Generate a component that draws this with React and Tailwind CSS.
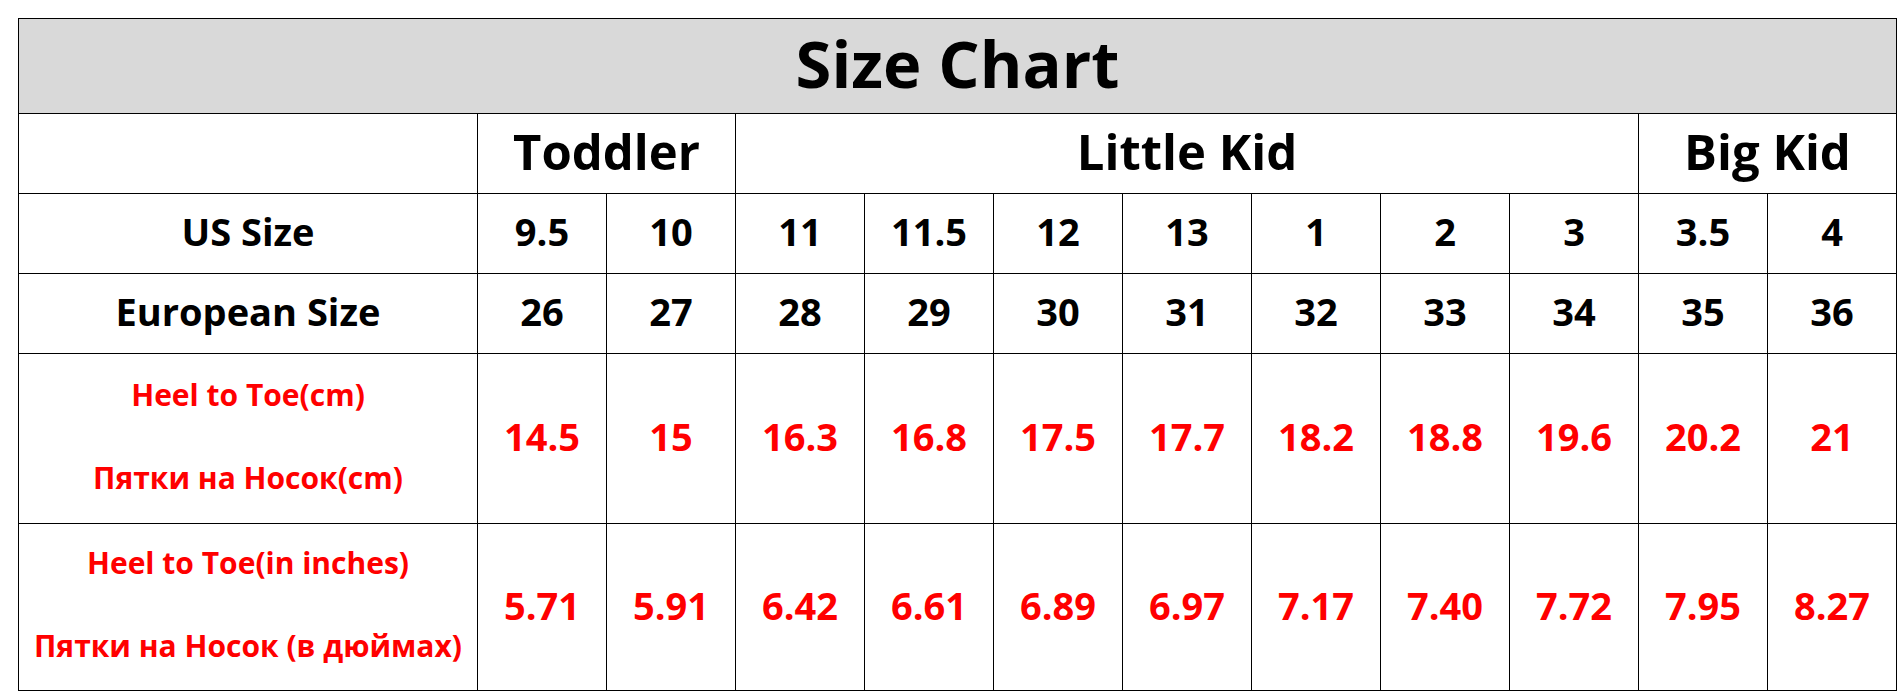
import React from "react";

const US = ["9.5", "10", "11", "11.5", "12", "13", "1", "2", "3", "3.5", "4"];
const EU = ["26", "27", "28", "29", "30", "31", "32", "33", "34", "35", "36"];
const CM = ["14.5", "15", "16.3", "16.8", "17.5", "17.7", "18.2", "18.8", "19.6", "20.2", "21"];
const INCH = ["5.71", "5.91", "6.42", "6.61", "6.89", "6.97", "7.17", "7.40", "7.72", "7.95", "8.27"];

const cell = "bg-white flex items-center justify-center pb-[5px]";

export default function App() {
  return (
    <div
      className="min-h-screen bg-white pl-[18px] pt-[18px]"
      style={{ fontFamily: "'Open Sans', 'Noto Sans', sans-serif" }}
    >
      <div className="grid w-max grid-cols-[458px_repeat(11,128px)] grid-rows-[94px_79px_79px_79px_169px_166px] gap-px bg-black p-px font-bold">
        {/* title */}
        <div className="col-span-12 flex items-center justify-center bg-[#d9d9d9] pb-[6px] text-[65px] leading-none text-black">
          Size Chart
        </div>

        {/* age groups */}
        <div className={cell} />
        <div className={`${cell} col-span-2 text-[49px] leading-none text-black`}>Toddler</div>
        <div className={`${cell} col-span-7 text-[49px] leading-none text-black`}>Little Kid</div>
        <div className={`${cell} col-span-2 text-[49px] leading-none text-black`}>Big Kid</div>

        {/* US */}
        <div className={`${cell} text-[38px] leading-none text-black`}>US Size</div>
        {US.map((v, i) => (
          <div key={"us" + i} className={`${cell} text-[38px] leading-none text-black`}>{v}</div>
        ))}

        {/* EU */}
        <div className={`${cell} text-[38px] leading-none text-black`}>European Size</div>
        {EU.map((v, i) => (
          <div key={"eu" + i} className={`${cell} text-[38px] leading-none text-black`}>{v}</div>
        ))}

        {/* cm */}
        <div className={`${cell} flex-col gap-[43px] text-[30px] leading-[40px] text-[#ff0000]`}>
          <span>Heel to Toe(cm)</span>
          <span>Пятки на Носок(cm)</span>
        </div>
        {CM.map((v, i) => (
          <div key={"cm" + i} className={`${cell} text-[38px] leading-none text-[#ff0000]`}>{v}</div>
        ))}

        {/* inches */}
        <div className={`${cell} flex-col gap-[43px] text-[30px] leading-[40px] text-[#ff0000]`}>
          <span>Heel to Toe(in inches)</span>
          <span>Пятки на Носок (в дюймах)</span>
        </div>
        {INCH.map((v, i) => (
          <div key={"in" + i} className={`${cell} text-[38px] leading-none text-[#ff0000]`}>{v}</div>
        ))}
      </div>
    </div>
  );
}
